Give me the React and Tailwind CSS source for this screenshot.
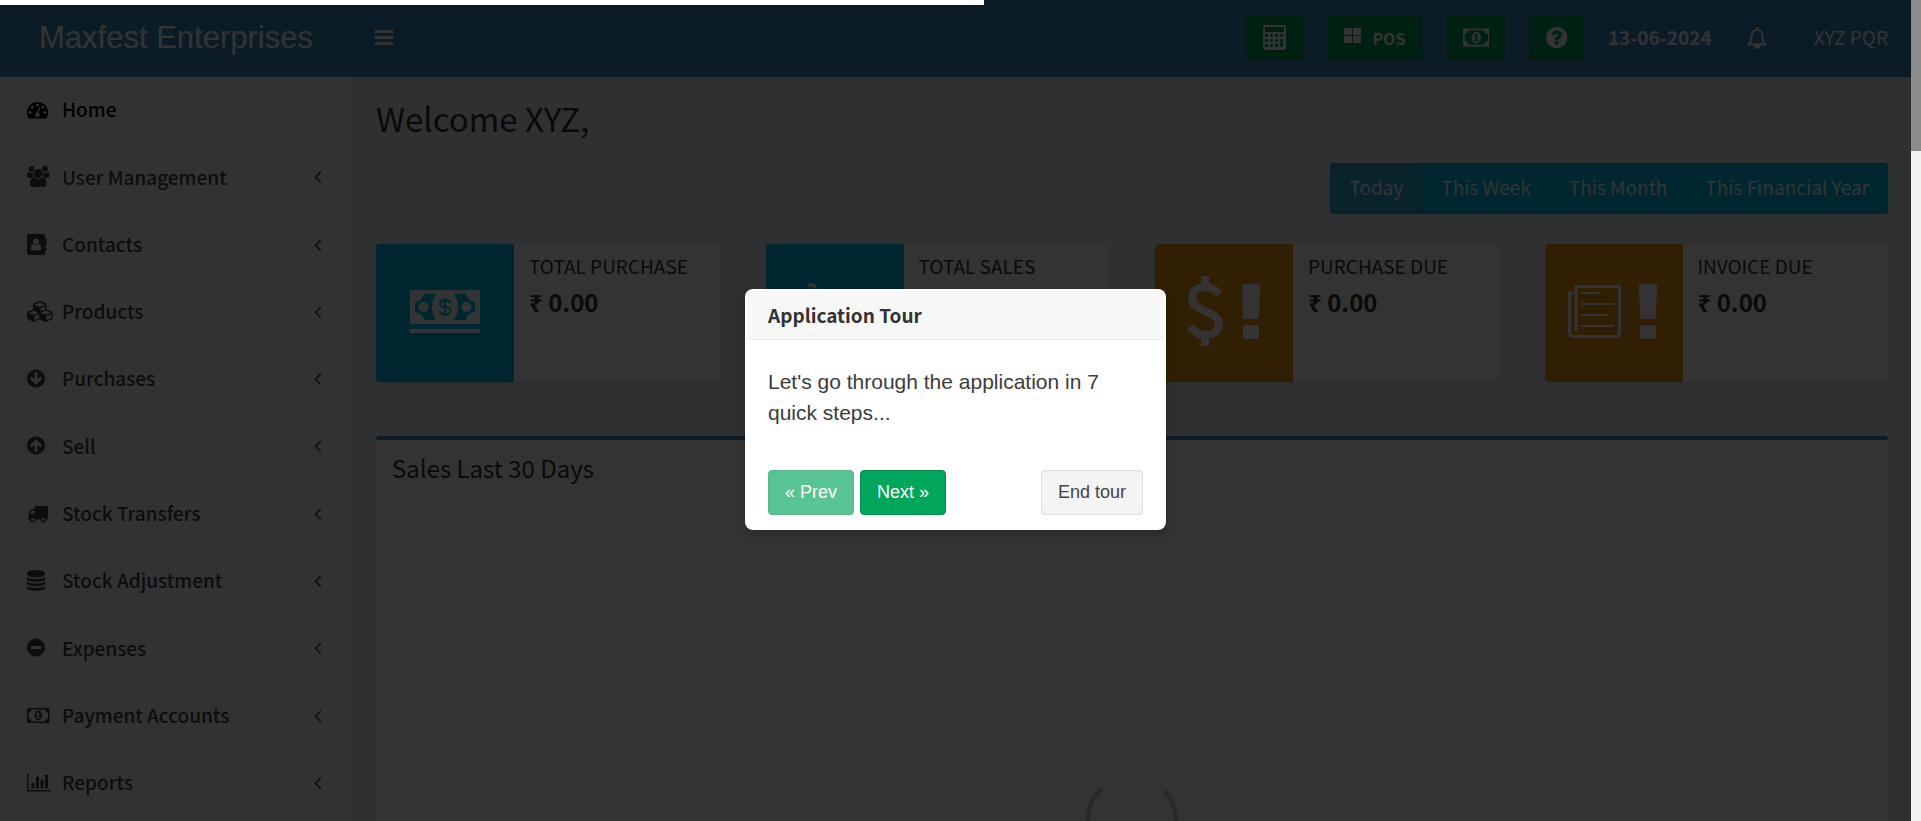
import React from "react";

const FA = {
  dashboard: [1792, "M384 1152q0-53-37.5-90.5t-90.5-37.5-90.5 37.5-37.5 90.5 37.5 90.5 90.5 37.5 90.5-37.5 37.5-90.5zm192-448q0-53-37.5-90.5t-90.5-37.5-90.5 37.5-37.5 90.5 37.5 90.5 90.5 37.5 90.5-37.5 37.5-90.5zm428 481l101-382q6-26-7.5-48.5t-38.5-29.5-48 6.5-30 39.5l-101 382q-60 5-107 43.5t-63 98.5q-20 77 20 146t117 89 146-20 89-117q16-60-6-117t-72-91zm660-33q0-53-37.5-90.5t-90.5-37.5-90.5 37.5-37.5 90.5 37.5 90.5 90.5 37.5 90.5-37.5 37.5-90.5zm-640-640q0-53-37.5-90.5t-90.5-37.5-90.5 37.5-37.5 90.5 37.5 90.5 90.5 37.5 90.5-37.5 37.5-90.5zm448 192q0-53-37.5-90.5t-90.5-37.5-90.5 37.5-37.5 90.5 37.5 90.5 90.5 37.5 90.5-37.5 37.5-90.5zm320 448q0 261-141 483-19 29-54 29h-1402q-35 0-54-29-141-221-141-483 0-182 71-348t191-286 286-191 348-71 348 71 286 191 191 286 71 348z"],
  users: [1920, "M593 896q-162 5-265 128h-134q-82 0-138-40.5t-56-118.5q0-353 124-353 6 0 43.5 21t97.5 42.5 119 21.5q67 0 133-23-5 37-5 66 0 139 81 256zm1071 637q0 120-73 189.5t-194 69.5h-874q-121 0-194-69.5t-73-189.5q0-53 3.5-103.5t14-109 26.5-108.5 43-97.5 62-81 85.5-53.5 111.5-20q10 0 43 21.5t73 48 107 48 135 21.5 135-21.5 107-48 73-48 43-21.5q61 0 111.5 20t85.5 53.5 62 81 43 97.5 26.5 108.5 14 109 3.5 103.5zm-1024-1277q0 106-75 181t-181 75-181-75-75-181 75-181 181-75 181 75 75 181zm704 384q0 159-112.5 271.5t-271.5 112.5-271.5-112.5-112.5-271.5 112.5-271.5 271.5-112.5 271.5 112.5 112.5 271.5zm576 225q0 78-56 118.5t-138 40.5h-134q-103-123-265-128 81-117 81-256 0-29-5-66 66 23 133 23 59 0 119-21.5t97.5-42.5 43.5-21q124 0 124 353zm-128-609q0 106-75 181t-181 75-181-75-75-181 75-181 181-75 181 75 75 181z"],
  contacts: [1664, "M1028 644q0 107-76.5 183t-183.5 76-183.5-76-76.5-183q0-108 76.5-184t183.5-76 183.5 76 76.5 184zm-48 220q46 0 82.5 17t60 47.5 39.5 67 24 81 11.5 82.5 3.5 79q0 67-39.5 118.5t-105.5 51.5h-576q-66 0-105.5-51.5t-39.5-118.5q0-48 4.5-93.5t18.5-98.5 36.5-91.5 63-64.5 93.5-26h5q7 4 32 19.5t35.5 21 33 17 37 16 35 9 39.5 4.5 39.5-4.5 35-9 37-16 33-17 35.5-21 32-19.500zm684-256q0 13-9.5 22.5t-22.5 9.5h-96v128h96q13 0 22.5 9.5t9.5 22.5v192q0 13-9.5 22.5t-22.5 9.5h-96v128h96q13 0 22.5 9.5t9.5 22.5v192q0 13-9.5 22.5t-22.5 9.5h-96v224q0 66-47 113t-113 47h-1216q-66 0-113-47t-47-113v-1472q0-66 47-113t113-47h1216q66 0 113 47t47 113v224h96q13 0 22.5 9.5t9.5 22.5v192q0 13-9.5 22.5t-22.5 9.5h-96v128h96q13 0 22.5 9.5t9.5 22.5z"],
  cubes: [2176, "M640 1632l384-192v-314l-384 164v342zm-64-454l404-173-404-173-404 173zm1088 454l384-192v-314l-384 164v342zm-64-454l404-173-404-173-404 173zm-448-293l384-165v-266l-384 164v267zm-64-379l441-189-441-189-441 189zm1088 518v416q0 36-19 67t-52 47l-448 224q-25 14-57 14t-57-14l-448-224q-4-2-7-4-2 2-7 4l-448 224q-25 14-57 14t-57-14l-448-224q-33-16-52-47t-19-67v-416q0-38 21.5-70t56.5-48l434-186v-400q0-38 21.5-70t56.5-48l448-192q23-10 50-10t50 10l448 192q35 16 56.5 48t21.5 70v400l434 186q36 16 57 48t21 70z"],
  down: [1536, "M1284 897q0-27-18-45l-91-91q-18-18-45-18t-45 18l-189 189v-502q0-26-19-45t-45-19h-128q-26 0-45 19t-19 45v502l-189-189q-19-19-45-19t-45 19l-91 91q-18 18-18 45t18 45l362 362 91 91q18 18 45 18t45-18l91-91 362-362q18-18 18-45zm252-1q0 209-103 385.5t-279.5 279.5-385.5 103-385.5-103-279.5-279.5-103-385.5 103-385.5 279.5-279.5 385.5-103 385.5 103 279.5 279.5 103 385.5z"],
  minus: [1536, "M1216 960v-128q0-26-19-45t-45-19h-768q-26 0-45 19t-19 45v128q0 26 19 45t45 19h768q26 0 45-19t19-45zm320-64q0 209-103 385.5t-279.5 279.5-385.5 103-385.5-103-279.5-279.5-103-385.5 103-385.5 279.5-279.5 385.5-103 385.5 103 279.5 279.5 103 385.5z"],
  truck: [1792, "M640 1408q0-52-38-90t-90-38-90 38-38 90 38 90 90 38 90-38 38-90zm-384-512h384v-256h-158q-13 0-22 9l-195 195q-9 9-9 22v30zm1280 512q0-52-38-90t-90-38-90 38-38 90 38 90 90 38 90-38 38-90zm256-1088v1024q0 15-4 26.5t-13.5 18.5-16.5 11.5-23.5 6-22.5 2-25.5 0-22.5-.5q0 106-75 181t-181 75-181-75-75-181h-384q0 106-75 181t-181 75-181-75-75-181h-64q-3 0-22.5.5t-25.5 0-22.5-2-23.5-6-16.5-11.5-13.5-18.5-4-26.5q0-26 19-45t45-19v-320q0-8-.5-35t0-38 2.5-34.5 6.5-37 14-30.5 22.5-30l198-198q19-19 50.5-32t58.5-13h160v-192q0-26 19-45t45-19h1024q26 0 45 19t19 45z"],
  database: [1536, "M768 768q237 0 443-43t325-127v170q0 69-103 128t-280 93.5-385 34.5-385-34.5-280-93.5-103-128v-170q119 84 325 127t443 43zm0 768q237 0 443-43t325-127v170q0 69-103 128t-280 93.5-385 34.5-385-34.5-280-93.5-103-128v-170q119 84 325 127t443 43zm0-384q237 0 443-43t325-127v170q0 69-103 128t-280 93.5-385 34.5-385-34.5-280-93.5-103-128v-170q119 84 325 127t443 43zm0-1152q208 0 385 34.5t280 93.5 103 128v128q0 69-103 128t-280 93.5-385 34.5-385-34.5-280-93.5-103-128v-128q0-69 103-128t280-93.5 385-34.5z"],
  money: [1920, "M768 1152h384v-96h-128v-448h-114l-148 137 77 80q42-37 55-57h2v288h-128v96zm512-256q0 70-21 142t-59.5 134-101.5 101-138 39-138-39-101.5-101-59.5-134-21-142 21-142 59.5-134 101.5-101 138-39 138 39 101.5 101 59.5 134 21 142zm512 256v-512q-106 0-181-75t-75-181h-1152q0 106-75 181t-181 75v512q106 0 181 75t75 181h1152q0-106 75-181t181-75zm128-832v1152q0 26-19 45t-45 19h-1792q-26 0-45-19t-19-45v-1152q0-26 19-45t45-19h1792q26 0 45 19t19 45z"],
  chart: [2048, "M640 896v512h-256v-512h256zm384-512v1024h-256v-1024h256zm1024 1152v128h-2048v-1536h128v1408h1920zm-640-896v768h-256v-768h256zm384-384v1152h-256v-1152h256z"],
  angle: [640, "M627 544q0 13-10 23l-393 393 393 393q10 10 10 23t-10 23l-50 50q-10 10-23 10t-23-10l-466-466q-10-10-10-23t10-23l466-466q10-10 23-10t23 10l50 50q10 10 10 23z"],
  question: [1536, "M896 1376v-192q0-14-9-23t-23-9h-192q-14 0-23 9t-9 23v192q0 14 9 23t23 9h192q14 0 23-9t9-23zm256-672q0-88-55.5-163t-138.5-116-170-41q-243 0-371 213-15 24 8 42l132 100q7 6 19 6 16 0 25-12 53-68 86-92 34-24 86-24 48 0 85.5 26t37.5 59q0 38-20 61t-68 45q-63 28-115.5 86.5t-52.5 125.5v36q0 14 9 23t23 9h192q14 0 23-9t9-23q0-19 21.5-49.5t54.5-49.5q32-18 49-28.5t46-35 44.5-48 28-60.5 12.5-81zm384 192q0 209-103 385.5t-279.5 279.5-385.5 103-385.5-103-279.5-279.5-103-385.5 103-385.5 279.5-279.5 385.5-103 385.5 103 279.5 279.5 103 385.5z"],
};

function Icon({ name, className = "" }) {
  const [width, d] = FA[name];
  return (
    <svg viewBox={`0 0 ${width} 1792`} fill="currentColor" aria-hidden="true" className={`shrink-0 ${className}`}>
      <path d={d} fillRule={name === "contacts" ? "evenodd" : "nonzero"} />
    </svg>
  );
}

const NAV = [
  { label: "Home", icon: "dashboard" },
  { label: "User Management", icon: "users" },
  { label: "Contacts", icon: "contacts" },
  { label: "Products", icon: "cubes" },
  { label: "Purchases", icon: "down" },
  { label: "Sell", icon: "down", flip: true },
  { label: "Stock Transfers", icon: "truck" },
  { label: "Stock Adjustment", icon: "database" },
  { label: "Expenses", icon: "minus" },
  { label: "Payment Accounts", icon: "money" },
  { label: "Reports", icon: "chart" },
];

function Sidebar() {
  return (
    <aside className="w-[353px] shrink-0 border-r border-[#d2d6de] bg-[#f9fafc]">
      <ul className="grid h-[740px] auto-rows-fr">
        {NAV.map((item, i) => (
          <li key={item.label} className="flex">
            <a
              href="#"
              className={`flex flex-1 items-center pr-[31px] pb-[2px] pl-[27px] text-[19px] font-medium ${i === 0 ? "bg-[#fbfbfb] text-black" : "text-[#444]"}`}
            >
              <span className="flex w-[35px]">
                <Icon name={item.icon} className={`h-[21px] ${item.flip ? "rotate-180" : ""}`} />
              </span>
              <span className="flex-1">{item.label}</span>
              {i > 0 && <Icon name="angle" className="h-[21px]" />}
            </a>
          </li>
        ))}
      </ul>
    </aside>
  );
}

function CalculatorIcon() {
  return (
    <svg viewBox="0 0 23 25" className="h-[25px] w-[23px]" aria-hidden="true">
      <rect width="23" height="25" rx="2" fill="#fff" />
      <path d="M2 2h19v5H2z" fill="#00a65a" />
      <g fill="#00a65a">
        {[9, 14, 19].map((y) =>
          [2, 7, 12].map((x) => <rect key={`${x}-${y}`} x={x} y={y} width="3" height="3" rx="1" />)
        )}
        <rect x="17" y="9" width="3" height="3" rx="1" />
        <rect x="17" y="14" width="3" height="8" rx="1" />
      </g>
    </svg>
  );
}

function BellIcon() {
  return (
    <svg viewBox="0 0 20 22" className="h-[22px]" fill="none" stroke="#fff" strokeWidth="2" aria-hidden="true">
      <path d="M10 0v3M1.500 17.500c2.500-2 3-4.500 3-8.500 0-3 2-6 5.500-6s5.500 3 5.500 6c0 4 .5 6.500 3 8.500z" strokeLinejoin="round" />
      <path d="M8 19a2 2 0 0 0 4 0z" fill="#fff" />
    </svg>
  );
}

function HeaderButton({ label, width, children }) {
  return (
    <button aria-label={label} className={`flex h-[45px] items-center justify-center border border-[#008d4c] bg-[#00a65a] text-white ${width}`}>
      {children}
    </button>
  );
}

function Header() {
  return (
    <header className="flex h-[77px] items-center bg-[#3c8dbc] pr-[23px] pb-[2px] text-white">
      <a href="#" className="w-[352px] text-center font-['Liberation_Sans',sans-serif] text-[31px] leading-[45px]">
        Maxfest Enterprises
      </a>
      <button aria-label="Toggle navigation" className="ml-[23px]">
        <svg viewBox="0 0 18 15" className="h-[15px] w-[18px]" fill="#fff" aria-hidden="true">
          <path d="M0 0h18v3H0zM0 6h18v3H0zM0 12h18v3H0z" />
        </svg>
      </button>
      <div className="ml-auto flex items-center gap-[25px]">
        <HeaderButton label="Calculator" width="w-[57px]"><CalculatorIcon /></HeaderButton>
        <HeaderButton label="POS" width="w-[94px]">
          <svg viewBox="0 0 17 15" className="mr-[11px] mb-1 h-[15px] w-[17px]" fill="currentColor" aria-hidden="true">
            <rect width="8" height="7" rx="1" /><rect x="9" width="8" height="7" rx="1" />
            <rect y="8" width="8" height="7" rx="1" /><rect x="9" y="8" width="8" height="7" rx="1" />
          </svg>
          <span className="text-[16px] font-bold">POS</span>
        </HeaderButton>
        <HeaderButton label="Register details" width="w-[58px]"><Icon name="money" className="h-[25px]" /></HeaderButton>
        <HeaderButton label="Help" width="w-[53px]"><Icon name="question" className="h-[25px]" /></HeaderButton>
        <strong className="text-[19px] font-bold">13-06-2024</strong>
        <button aria-label="Notifications" className="mx-[10px]"><BellIcon /></button>
        <a href="#" className="ml-[12px] text-[19px]">XYZ PQR</a>
      </div>
    </header>
  );
}

function CashIcon() {
  return (
    <svg viewBox="0 0 70 43" className="w-[70px]" aria-hidden="true">
      <path d="M0 0h70v34H0zM0 39h70v4H0z" fill="#fff" />
      <path d="M14 4h12q-8 13 0 26H14q-1-7-9-8V12q8-1 9-8zM56 4H44q8 13 0 26h12q1-7 9-8V12q-8-1-9-8z" fill="#00c0ef" />
      <circle cx="13.500" cy="17" r="5" fill="#fff" /><circle cx="56.500" cy="17" r="5" fill="#fff" />
      <path d="M40 13q-1-3-5-3t-5 3.500 5 3.500 5.500 4-5.500 3.500-5.500-3.500M35 8v18" fill="none" stroke="#00c0ef" strokeWidth="2" />
    </svg>
  );
}

function CartIcon() {
  return (
    <svg viewBox="0 0 70 56" className="w-[70px]" fill="none" stroke="#fff" strokeWidth="3" aria-hidden="true">
      <path d="M8 2h5q2 0 3 4l9 31h34l8-23H20" strokeLinejoin="round" />
      <circle cx="28" cy="48" r="4" /><circle cx="54" cy="48" r="4" />
    </svg>
  );
}

function Bang() {
  return (
    <svg viewBox="0 0 18 55" className="w-[18px]" fill="#fff" aria-hidden="true">
      <path d="M2 0h14q2 0 2 2l-1 31q0 2-2 2H3q-2 0-2-2L0 2q0-2 2-2zM3 41h12q2 0 2 2v10q0 2-2 2H3q-2 0-2-2V43q0-2 2-2z" />
    </svg>
  );
}

function DollarIcon() {
  return (
    <svg viewBox="0 0 38 70" className="w-[38px]" fill="none" stroke="#fff" aria-hidden="true">
      <path d="M19 0v12M19 58v12" strokeWidth="8" />
      <path d="M33 18C29 13 24 11 19 11c-7 0-13 4-13 11 0 8 7 10 13 13s14 6 14 13-6 11-14 11c-6 0-11-3-15-8" strokeWidth="8" />
    </svg>
  );
}

function PaperIcon() {
  return (
    <svg viewBox="0 0 53 53" className="w-[53px]" fill="none" stroke="#fff" strokeWidth="3" aria-hidden="true">
      <path d="M8 46V1.500h43.500V48q0 3.500-3.500 3.500H5q-3.500 0-3.500-3.500V8H5" />
      <path d="M13 8h18M13 19h33M13 30h27M13 41h33" strokeWidth="2" />
    </svg>
  );
}

const CARDS = [
  { label: "TOTAL PURCHASE", color: "bg-[#00c0ef]", icon: <CashIcon /> },
  { label: "TOTAL SALES", color: "bg-[#00c0ef]", icon: <CartIcon /> },
  { label: "PURCHASE DUE", color: "bg-[#f39c12] pr-[3px]", icon: <><DollarIcon /><Bang /></> },
  { label: "INVOICE DUE", color: "bg-[#f39c12] pr-[3px]", icon: <><PaperIcon /><Bang /></> },
];

const RANGES = ["Today", "This Week", "This Month", "This Financial Year"];

function Dashboard() {
  return (
    <main className="flex min-w-0 flex-1 flex-col bg-[#ecf0f5] px-[23px] pt-[22px]">
      <h1 className="text-[33px] leading-[38px] text-[#333]">Welcome XYZ,</h1>
      <div className="mt-[26px] flex justify-end">
        <div className="flex overflow-hidden rounded text-[19px] text-white">
          {RANGES.map((range, i) => (
            <button
              key={range}
              className={`h-[51px] border-y border-r pr-[18px] pb-[2px] pl-[19px] ${i === 0 ? "border-[#269abc] bg-[#31b0d5] shadow-[inset_0_3px_5px_rgba(0,0,0,0.125)]" : "border-[#00acd6] bg-[#00c0ef]"}`}
            >
              {range}
            </button>
          ))}
        </div>
      </div>
      <div className="mt-[30px] grid grid-cols-4 gap-[46px]">
        {CARDS.map((card) => (
          <section key={card.label} className="flex h-[138px] overflow-hidden rounded bg-white shadow-[0_1px_1px_rgba(0,0,0,0.1)]">
            <div className={`flex w-[138px] shrink-0 items-center justify-center gap-[18px] pb-1 ${card.color}`}>{card.icon}</div>
            <div className="px-[15px] pt-[7px] text-[#333]">
              <h2 className="text-[19px] leading-[30px] whitespace-nowrap">{card.label}</h2>
              <p className="mt-1 text-[24px] leading-[34px] font-bold">₹ 0.00</p>
            </div>
          </section>
        ))}
      </div>
      <section className="mt-[54px] flex-1 rounded-t border-t-4 border-[#3c8dbc] bg-white px-4 pt-[13px]">
        <h2 className="text-[24px] leading-[30px] text-[#333]">Sales Last 30 Days</h2>
        <svg viewBox="0 0 92 92" className="mx-auto mt-[291px] h-[92px] w-[92px]" fill="none" stroke="#c8c8c8" strokeWidth="4" aria-hidden="true">
          <path d="M15 15A44 44 0 0 0 15 77M78 16A44 44 0 0 1 78 76" />
        </svg>
      </section>
    </main>
  );
}

function TourDialog() {
  return (
    <div role="dialog" aria-labelledby="tour-title" className="w-[421px] rounded-lg bg-white p-[2px] font-['Liberation_Sans',sans-serif] text-[#3c3c3c] shadow-[0_5px_10px_rgba(0,0,0,0.2)]">
      <h3 id="tour-title" className="rounded-t-md border-b border-[#ebebeb] bg-[#f7f7f7] px-[21px] font-['Noto_Sans_CJK_SC',sans-serif] text-[19px] leading-[48px] font-bold text-[#333]">
        Application Tour
      </h3>
      <p className="px-[21px] pt-[26px] text-[21px] leading-[31px]">Let's go through the application in 7 quick steps...</p>
      <div className="flex gap-[6px] px-[21px] pt-[42px] pb-[13px] text-[18px]">
        <button className="h-[45px] w-[86px] rounded border border-[#008d4c] bg-[#00a65a] text-white opacity-65">« Prev</button>
        <button className="h-[45px] w-[86px] rounded border border-[#008d4c] bg-[#00a65a] text-white">Next »</button>
        <button className="ml-auto h-[45px] w-[102px] rounded border border-[#ddd] bg-[#f4f4f4] text-[#444]">End tour</button>
      </div>
    </div>
  );
}

export default function App() {
  return (
    <div className="flex h-screen overflow-hidden font-['Noto_Sans_CJK_SC','Noto_Sans',sans-serif]">
      <div className="relative flex min-w-0 flex-1 flex-col overflow-hidden">
        <Header />
        <div className="flex min-h-0 flex-1">
          <Sidebar />
          <Dashboard />
        </div>
        <div className="absolute inset-0 flex items-center justify-center bg-black/80 pb-[2px]">
          <TourDialog />
        </div>
      </div>
      <div className="w-[10px] shrink-0 bg-[#f1f1f1]">
        <div className="h-[151px] bg-[#8b8b8b]" />
      </div>
      <div className="absolute top-0 left-0 h-[5px] w-[984px] bg-white" />
    </div>
  );
}
